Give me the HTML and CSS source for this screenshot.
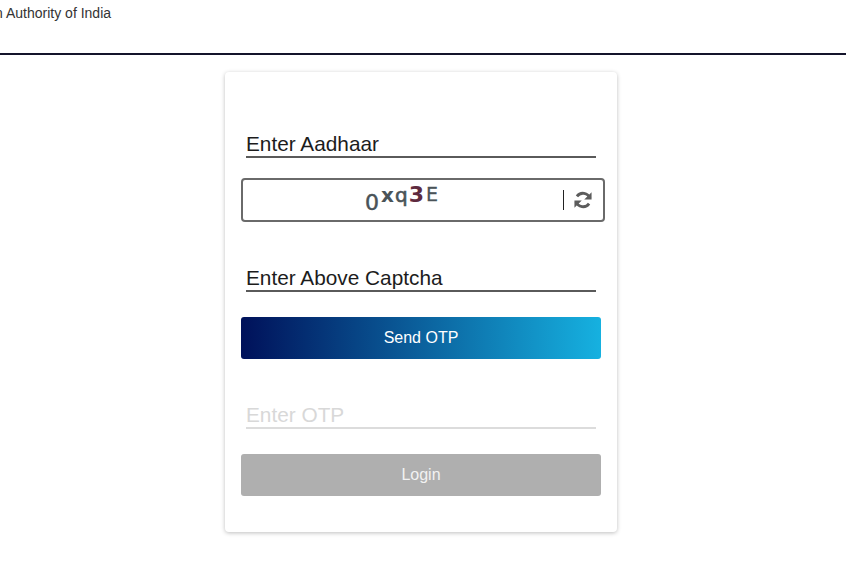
FILE: index.html
```html
<!DOCTYPE html>
<html>
<head>
  <meta charset="utf-8">
  <link rel="stylesheet" href="styles.css">
</head>
<body>
  <div class="header">
    <div class="org-name">Unique Identification Authority of India</div>
  </div>

  <div class="card">
    <div class="field">
      <div class="field-label">Enter Aadhaar</div>
    </div>

    <div class="captcha-box">
      <div class="captcha-text">
        <span class="ch-0">0</span><span class="ch-x">x</span><span class="ch-q">q</span><span class="ch-3">3</span><span class="ch-e">E</span>
      </div>
      <div class="captcha-divider"></div>
      <svg class="refresh-icon" viewBox="1 1 22 22">
        <path d="M20.5 10 A9 9 0 0 0 4.6 7.6" fill="none" stroke="#5c5c5c" stroke-width="3.4"/>
        <path d="M22.5 2.5 V11.5 H13.5 Z" fill="#5c5c5c"/>
        <path d="M3.5 14 A9 9 0 0 0 19.4 16.4" fill="none" stroke="#5c5c5c" stroke-width="3.4"/>
        <path d="M1.5 21.5 V12.5 H10.5 Z" fill="#5c5c5c"/>
      </svg>
    </div>

    <div class="field field-captcha">
      <div class="field-label">Enter Above Captcha</div>
    </div>

    <button class="btn btn-send">Send OTP</button>

    <div class="field field-otp">
      <div class="field-label">Enter OTP</div>
    </div>

    <button class="btn btn-login">Login</button>
  </div>
</body>
</html>
```

FILE: styles.css
```css
body {
  margin: 0;
  padding-bottom: 20px;
  font-family: "Liberation Sans", Arial, sans-serif;
  background: #fff;
}

.header {
  height: 53px;
  border-bottom: 2px solid #14142b;
  overflow: hidden;
}

.org-name {
  margin: 6px 0 0 -124px;
  font-size: 14px;
  line-height: 15px;
  color: #333;
  white-space: nowrap;
}

.card {
  box-sizing: border-box;
  width: 392px;
  height: 460px;
  margin: 17px 0 0 225px;
  padding: 58px 16px 0;
  border-radius: 4px;
  background: #fff;
  box-shadow: 0 1px 4px rgba(0,0,0,0.26);
}

.field {
  margin: 0 5px;
  border-bottom: 2px solid #5a5a5a;
  height: 26px;
}

.field-label {
  font-size: 20.8px;
  line-height: 28px;
  color: #1c1c1c;
}

.captcha-box {
  display: flex;
  align-items: center;
  box-sizing: border-box;
  width: 364px;
  height: 44px;
  margin: 20px 0 0 0;
  border: 2px solid #6a6a6a;
  border-radius: 4px;
}

.captcha-text {
  flex: 1;
  display: flex;
  justify-content: center;
  align-items: center;
  padding-left: 8px;
  font-family: "DejaVu Sans", sans-serif;
  color: #4a5358;
  height: 100%;
}

.ch-0 {
  font-size: 22px;
  -webkit-text-stroke: 0.5px #4a5358;
  transform: translateY(2px);
}

.ch-x {
  font-size: 20px;
  font-weight: bold;
  margin-left: 2px;
  transform: translateY(-5px);
}

.ch-q {
  font-size: 20px;
  -webkit-text-stroke: 0.6px #4a5358;
  margin-left: 1px;
  transform: translateY(-5px);
}

.ch-3 {
  font-size: 22px;
  font-weight: bold;
  color: #5e2a3f;
  margin-left: 1px;
  transform: translateY(-6px);
}

.ch-e {
  font-size: 19px;
  -webkit-text-stroke: 0.3px #4a5358;
  margin-left: 2px;
  transform: translateY(-6px);
}

.captcha-divider {
  width: 1px;
  height: 20px;
  background: #222;
  margin-left: 11px;
}

.refresh-icon {
  width: 18px;
  height: 18px;
  margin: 0 11px 0 10px;
}

.field-captcha {
  margin-top: 42px;
}

.btn {
  display: block;
  width: 360px;
  height: 42px;
  margin: 0;
  border: none;
  border-radius: 3px;
  color: #fff;
  font-family: "Liberation Sans", Arial, sans-serif;
  font-size: 16px;
}

.btn-send {
  margin-top: 25px;
  background: linear-gradient(90deg, #00115a 0%, #16b1e0 100%);
}

.field-otp {
  margin-top: 42px;
  border-bottom: 2px solid #dcdcdc;
}

.field-otp .field-label {
  color: #d8d8d8;
}

.btn-login {
  margin-top: 25px;
  background: #afafaf;
  color: #f2f2f2;
}
```
